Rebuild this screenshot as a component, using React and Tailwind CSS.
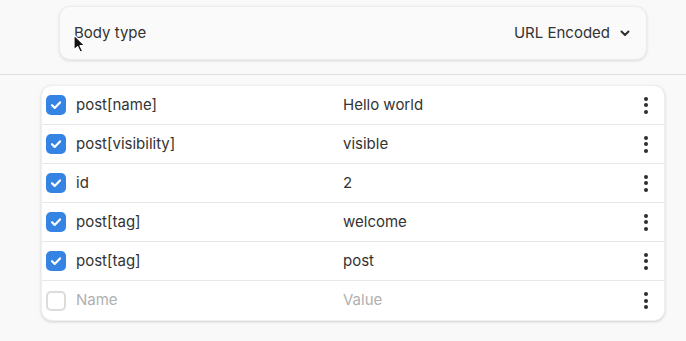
import React from "react";

const rows = [
  { name: "post[name]", value: "Hello world", on: true },
  { name: "post[visibility]", value: "visible", on: true },
  { name: "id", value: "2", on: true },
  { name: "post[tag]", value: "welcome", on: true },
  { name: "post[tag]", value: "post", on: true },
];

function Check({ on }) {
  if (!on) {
    return <div className="w-5 h-5 rounded-[5px] border-2 border-[#dcdcdc] bg-white" />;
  }
  return (
    <div className="w-5 h-5 rounded-[5px] bg-[#3584e4] flex items-center justify-center">
      <svg width="14" height="14" viewBox="0 0 14 14" fill="none">
        <path d="M3 7.2l2.7 2.7L11 4.4" stroke="white" strokeWidth="2.2" strokeLinecap="round" strokeLinejoin="round" />
      </svg>
    </div>
  );
}

function Kebab() {
  return (
    <div className="flex flex-col items-center gap-[2.5px]">
      <span className="w-[4px] h-[4px] rounded-full bg-[#2e2e2e]" />
      <span className="w-[4px] h-[4px] rounded-full bg-[#2e2e2e]" />
      <span className="w-[4px] h-[4px] rounded-full bg-[#2e2e2e]" />
    </div>
  );
}

function Row({ name, value, on, placeholder }) {
  const color = placeholder ? "text-[#b0b0b0]" : "text-[#333333]";
  return (
    <div className="flex items-center h-[39px] border-b border-[#e8e8e8] last:border-b-0">
      <div className="w-[34px] pl-[4px] flex items-center">
        <Check on={on} />
      </div>
      <div className={"w-[267px] " + color}>{name}</div>
      <div className={"flex-1 " + color}>{value}</div>
      <div className="w-[36px] flex justify-center">
        <Kebab />
      </div>
    </div>
  );
}

export default function App() {
  return (
    <div
      className="w-[686px] h-[341px] bg-[#f9f9f9] relative overflow-hidden text-[15px]"
      style={{ fontFamily: "Inter, 'Noto Sans', sans-serif" }}
    >
      <div className="h-[75px] border-b border-[#dedede] pt-[6px] px-[59px] pr-[39px]">
        <div className="h-[54px] rounded-[11px] bg-[#fafafa] border border-[#ececec] shadow-[0_1px_3px_rgba(0,0,0,0.12)] flex items-center justify-between pl-[14px] pr-[15px] text-[#333333]">
          <span>Body type</span>
          <div className="flex items-center gap-[9px]">
            <span>URL Encoded</span>
            <svg width="12" height="12" viewBox="0 0 12 12" fill="none">
              <path d="M2.5 4.5L6 8l3.5-3.5" stroke="#2e2e2e" strokeWidth="2" strokeLinecap="round" strokeLinejoin="round" />
            </svg>
          </div>
        </div>
      </div>

      <div className="mt-[10px] ml-[41px] w-[624px] bg-white rounded-[11px] border border-[#efefef] shadow-[0_1px_3px_rgba(0,0,0,0.16)] overflow-hidden">
        {rows.map((r, i) => (
          <Row key={i} {...r} />
        ))}
        <Row name="Name" value="Value" on={false} placeholder />
      </div>

      {/* mouse cursor */}
      <svg className="absolute left-[73px] top-[34px]" width="14" height="20" viewBox="0 0 14 20">
        <path d="M1 1v15l3.6-3.4 2.6 5.6 2.4-1.1-2.6-5.4H12z" fill="#111" stroke="#fff" strokeWidth="1.2" strokeLinejoin="round" />
      </svg>
    </div>
  );
}
